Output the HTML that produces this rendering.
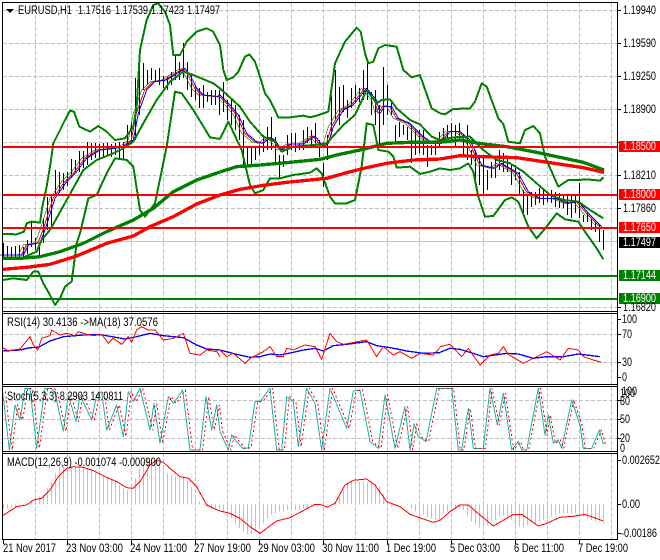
<!DOCTYPE html>
<html><head><meta charset="utf-8"><style>
html,body{margin:0;padding:0;background:#fff;width:660px;height:560px;overflow:hidden}
svg{position:absolute;left:0;top:0}
text{font-family:"Liberation Sans",sans-serif;font-size:11.5px;fill:#000}
.w{fill:#fff}
</style></head><body>
<svg width="660" height="560" viewBox="0 0 660 560" shape-rendering="crispEdges">
<rect width="660" height="560" fill="#fff"/>
<g stroke="#c0c0c0" stroke-width="1" stroke-dasharray="4 2" fill="none">
<path d="M35.5 3V539M67.5 3V539M99.5 3V539M131.5 3V539M163.5 3V539M195.5 3V539M227.5 3V539M259.5 3V539M291.5 3V539M323.5 3V539M355.5 3V539M387.5 3V539M419.5 3V539M451.5 3V539M483.5 3V539M515.5 3V539M547.5 3V539M579.5 3V539M611.5 3V539"/>
<path d="M3 10.5H617M3 43.5H617M3 76.5H617M3 109.5H617M3 142.5H617M3 175.5H617M3 208.5H617M3 275.5H617M3 307.5H617M3 334.5H617M3 362.5H617M3 400.5H617M3 419.5H617M3 438.5H617"/>
</g>
<path d="M3 241.5H617" stroke="#c0c0c0" fill="none"/>
<g transform="translate(0,305) scale(1,0.33333)">
<path stroke="#c0c0c0" stroke-width="1" fill="none" d="M3.5 598V610M7.5 598V610M11.5 598V608M15.5 598V607M19.5 598V605M23.5 598V603M27.5 598V600M31.5 598V590M35.5 598V580M39.5 598V575M43.5 598V570M47.5 598V550M51.5 598V530M55.5 598V505M59.5 598V485M63.5 598V480M67.5 598V480M71.5 598V484M75.5 598V485M79.5 598V485M83.5 598V488M87.5 598V490M91.5 598V492M95.5 598V495M99.5 598V505M103.5 598V510M107.5 598V515M111.5 598V520M115.5 598V530M119.5 598V540M123.5 598V550M127.5 598V555M131.5 598V550M135.5 598V520M139.5 598V490M143.5 598V470M147.5 598V462M151.5 598V460M155.5 598V465M159.5 598V475M163.5 598V490M167.5 598V505M171.5 598V510M175.5 598V515M179.5 598V517M183.5 598V515M187.5 598V525M191.5 598V545M195.5 598V575M199.5 598V590M203.5 598V600M207.5 598V605M211.5 598V610M215.5 598V612M219.5 598V612M223.5 598V620M227.5 598V630M231.5 598V640M235.5 598V655M239.5 598V670M243.5 598V680M247.5 598V688M251.5 598V688M255.5 598V680M259.5 598V670M263.5 598V655M267.5 598V640M271.5 598V630M275.5 598V625M279.5 598V620M283.5 598V620M287.5 598V615M291.5 598V617M295.5 598V615M299.5 598V615M303.5 598V612M307.5 598V610M311.5 598V605M315.5 598V600M319.5 598V595M323.5 598V590M327.5 598V600M331.5 598V600M335.5 598V590M339.5 598V575M343.5 598V555M347.5 598V535M351.5 598V530M355.5 598V530M359.5 598V530M363.5 598V530M367.5 598V532M371.5 598V533M375.5 598V537M379.5 598V545M383.5 598V565M387.5 598V590M391.5 598V605M395.5 598V600M399.5 598V598M403.5 598V598M407.5 598V600M411.5 598V610M415.5 598V620M419.5 598V625M423.5 598V630M427.5 598V635M431.5 598V640M435.5 598V645M439.5 598V645M443.5 598V625M447.5 598V620M451.5 598V605M455.5 598V610M459.5 598V610M463.5 598V615M467.5 598V635M471.5 598V650M475.5 598V660M479.5 598V668M483.5 598V665M487.5 598V660M491.5 598V650M495.5 598V645M499.5 598V635M503.5 598V630M507.5 598V640M511.5 598V645M515.5 598V660M519.5 598V665M523.5 598V668M527.5 598V660M531.5 598V655M535.5 598V655M539.5 598V650M543.5 598V645M547.5 598V640M551.5 598V635M555.5 598V630M559.5 598V625M563.5 598V625M567.5 598V625M571.5 598V625M575.5 598V625M579.5 598V630M583.5 598V635M587.5 598V640M591.5 598V645M595.5 598V650M599.5 598V650M603.5 598V655"/>
</g>
<path stroke="#000" stroke-width="1" fill="none" d="M3.5 243V258M7.5 246V258M11.5 247V257M15.5 246V258M19.5 245V257M23.5 247V258M27.5 240V254M31.5 222V247M35.5 238V250M39.5 243V257M43.5 218V243M47.5 197V230M51.5 195V225M55.5 170V195M59.5 172V193M63.5 173V190M67.5 172V186M71.5 159V178M75.5 160V172M79.5 151V172M83.5 151V168M87.5 142V165M91.5 143V160M95.5 143V158M99.5 144V158M103.5 143V157M107.5 143V155M111.5 144V157M115.5 143V155M119.5 142V158M123.5 142V160M127.5 125V147M131.5 122V142M135.5 78V140M139.5 58V115M143.5 63V90M147.5 70V85M151.5 68V80M155.5 70V82M159.5 68V85M163.5 76V88M167.5 77V90M171.5 72V85M175.5 55V80M179.5 62V80M183.5 43V78M187.5 62V90M191.5 75V97M195.5 85V100M199.5 88V108M203.5 85V108M207.5 92V102M211.5 90V105M215.5 90V105M219.5 90V115M223.5 82V112M227.5 100V120M231.5 100V125M235.5 105V130M239.5 115V140M243.5 120V165M247.5 148V165M251.5 148V165M255.5 147V160M259.5 145V155M263.5 135V152M267.5 127V150M271.5 117V150M275.5 137V165M279.5 155V178M283.5 155V167M287.5 135V155M291.5 133V150M295.5 133V152M299.5 143V150M303.5 130V150M307.5 127V143M311.5 130V145M315.5 123V147M319.5 140V157M323.5 163V187M327.5 135V160M331.5 95V135M335.5 70V120M339.5 87V125M343.5 85V112M347.5 100V118M351.5 88V108M355.5 85V102M359.5 88V102M363.5 70V100M367.5 62V100M371.5 92V115M375.5 90V125M379.5 105V147M383.5 67V125M387.5 85V115M391.5 100V115M395.5 125V142M399.5 122V137M403.5 125V135M407.5 127V140M411.5 125V163M415.5 130V155M419.5 130V153M423.5 130V155M427.5 145V167M431.5 145V155M435.5 140V155M439.5 132V148M443.5 128V140M447.5 125V138M451.5 123V140M455.5 125V147M459.5 123V140M463.5 135V155M467.5 125V160M471.5 150V165M475.5 150V183M479.5 155V185M483.5 155V195M487.5 170V190M491.5 162V178M495.5 160V178M499.5 150V170M503.5 153V172M507.5 157V172M511.5 165V185M515.5 165V180M519.5 172V195M523.5 190V215M527.5 195V215M531.5 192V207M535.5 192V205M539.5 188V203M543.5 190V205M547.5 193V202M551.5 190V203M555.5 192V207M559.5 193V208M563.5 195V208M567.5 195V215M571.5 195V218M575.5 195V213M579.5 183V218M583.5 215V222M587.5 213V222M591.5 218V230M595.5 222V232M599.5 225V242M603.5 230V250"/>
</svg>

<svg width="660" height="560" viewBox="0 0 1980 1680" shape-rendering="crispEdges" fill="none" stroke-linejoin="round">
<defs>
<polyline id="b1" points="8,765 70,765 85,735 120,728 135,690 165,595 200,545 230,515 260,475 300,450 370,442 400,420 415,340 440,270 465,245 500,240 540,215 555,205 570,225 590,265 610,285 660,290"/>
<polyline id="b2" points="0,285 30,315 55,345 80,400 110,425 130,430 150,412 165,420 185,450 215,432 250,432 285,408 310,440 325,430 340,380 370,330 400,315 440,265 470,300 480,340 495,318 515,320 535,355 570,370 610,410 640,430 660,430"/>
<polyline id="b3" points="0,430 30,395 60,395 90,420 125,495 165,505 185,490 235,520 265,575 300,595 350,595 385,610 415,605 450,645 485,680"/>
<polyline id="s1" points="8,260 28,435 45,300 60,345 75,250 90,250 110,430 125,320 135,250 155,250 165,265 190,378 205,270 228,350 240,270 275,345 290,270 305,260 320,375 350,300 370,395 385,260 400,290 420,250 450,375 462,295 480,415 505,275 520,295 548,255 570,435 600,435 618,275 635,375 650,300 660,380"/>
<polyline id="s2" points="0,380 25,435 35,390 50,410 70,432 85,428 105,290 120,290 150,250 170,435 185,435 200,275 220,290 235,425 260,250 285,295 305,435 330,250 380,370 400,258 420,255 450,410 475,430 495,270 525,430 555,305 570,435 582,357 595,395 618,410 650,250 660,250"/>
<polyline id="s3" points="0,250 35,250 55,435 65,435 85,310 100,430 130,430 150,250 172,360 190,265 215,435 235,410 245,435 260,435 295,250 315,390 325,330 340,415 355,405 365,430 395,285 420,360 430,430 455,430 478,375 490,418"/>
</defs>

<g>
<use href="#b1" stroke="#008000" stroke-width="2" transform="translate(-15,0)"/>
<use href="#b1" stroke="#f00" stroke-width="3" transform="translate(-6,0)"/>
<use href="#b1" stroke="#00f" stroke-width="3"/>
<g stroke="#008000" stroke-width="6">
<polyline points="8,702 50,703 72,695 80,670 95,665 120,668 127,620 140,560 150,500 160,430 175,400 195,360 210,332 222,335 238,380 270,395 295,378 320,395 345,420 375,415 400,380 410,320 420,150 440,60 460,15 475,10 495,35 510,75 520,165 540,165 560,125 590,95 620,85 640,95 660,135"/>
<polyline points="8,840 40,835 80,840 100,815 115,815 130,850 150,885 165,915 180,895 195,860 215,845 230,730 240,700 265,595 290,585 320,520 345,475 380,480 400,500 420,630 435,650 465,610 500,440 525,275 545,280 580,330 630,412 660,417"/>
<polyline points="8,775 70,772 110,755 125,720 150,690 200,600 250,510 290,480 340,460 370,445 400,425 430,370 470,300 510,245 550,215 580,225 640,250 660,265"/>
</g>
<polyline stroke="#008000" stroke-width="10" points="8,775 60,775 120,770 180,755 250,730 320,695 400,660 460,625 520,575 590,540 660,516"/>
<polyline stroke="#f00" stroke-width="10" points="8,808 80,802 150,793 230,768 320,730 400,708 450,680 520,650 590,612 660,585"/>
</g>
<g transform="translate(660,0)">
<use href="#b2" stroke="#008000" stroke-width="2" transform="translate(-15,0)"/>
<use href="#b2" stroke="#f00" stroke-width="3" transform="translate(-6,0)"/>
<use href="#b2" stroke="#00f" stroke-width="3"/>
<g stroke="#008000" stroke-width="6">
<polyline points="0,135 10,210 20,240 40,232 55,215 75,170 88,163 105,185 120,230 135,280 150,300 175,352 210,352 250,347 270,352 290,347 325,335 345,190 375,125 410,83 422,95 435,160 445,190 460,185 475,145 495,135 530,140 550,210 575,232 600,225 635,325 660,340"/>
<polyline points="0,417 25,365 65,450 90,555 105,580 130,570 150,535 180,535 220,525 270,518 290,505 305,520 330,590 345,610 380,610 405,600 425,500 440,370 460,375 475,450 505,455 520,470 530,503 570,500 600,522 630,515 660,505"/>
<polyline points="0,265 60,320 90,365 130,410 165,425 185,455 220,440 280,435 320,430 370,375 405,345 440,270 470,310 485,300 510,298 530,325 570,360 600,373 635,410 660,420"/>
</g>
<polyline stroke="#008000" stroke-width="10" points="0,516 50,500 120,495 200,488 300,478 350,465 420,450 500,430 570,427 660,427"/>
<polyline stroke="#f00" stroke-width="10" points="0,585 60,568 130,556 200,547 320,535 380,518 440,503 500,490 580,480 660,477"/>
</g>
<g transform="translate(1320,0)">
<use href="#b3" stroke="#008000" stroke-width="2" transform="translate(-15,0)"/>
<use href="#b3" stroke="#f00" stroke-width="3" transform="translate(-6,0)"/>
<use href="#b3" stroke="#00f" stroke-width="3"/>
<g stroke="#008000" stroke-width="6">
<polyline points="0,340 15,343 40,327 90,325 105,305 125,250 140,260 175,355 190,372 205,425 240,430 255,390 280,378 300,400 315,470 355,560 385,540 415,540 440,538 480,542 490,532"/>
<polyline points="0,505 30,510 60,505 85,490 100,515 115,590 135,650 160,648 195,600 215,592 235,605 265,680 290,715 320,680 350,640 375,658 415,665 435,695 470,745 490,778"/>
<polyline points="0,420 40,412 90,410 130,450 170,480 210,490 250,515 290,550 330,585 370,600 415,605 450,630 490,655"/>
</g>
<polyline stroke="#008000" stroke-width="10" points="0,427 60,420 130,432 200,440 280,455 360,472 430,487 492,510"/>
<polyline stroke="#f00" stroke-width="10" points="0,477 60,467 130,470 230,473 330,488 430,503 492,517"/>
</g>

<g transform="translate(0,915)">
<g stroke-width="3">
<polyline stroke="#00f" stroke-width="4" points="8,138 60,135 90,128 115,127 150,108 190,95 250,90 300,89 330,94 375,102 410,95 450,85 490,92 550,98 590,120 620,132 660,135"/>
<polyline stroke="#f00" points="8,128 25,137 60,132 90,95 100,120 113,135 125,100 150,92 155,75 180,90 200,85 225,92 235,80 260,88 280,92 305,88 325,115 340,100 365,118 385,95 395,112 410,75 425,65 445,75 465,75 490,105 520,100 550,85 570,145 600,150 620,135 650,140 660,155"/>
<use href="#s1" stroke="#20b2aa" stroke-width="3"/>
<use href="#s1" stroke="#f00" stroke-width="3" stroke-dasharray="6 8" transform="translate(8,0)"/>
<polyline stroke="#f00" points="8,632 30,618 50,605 80,600 100,585 125,580 150,555 175,515 200,490 220,485 250,487 280,497 320,517 350,530 380,548 400,550 420,530 450,480 470,465 490,472 510,490 540,515 565,520 590,545 620,600 640,610 660,618"/>
</g>
<g stroke-width="3" transform="translate(660,0)">
<polyline stroke="#00f" stroke-width="4" points="0,135 50,148 90,157 120,155 150,147 180,150 220,142 250,135 285,130 310,138 340,122 380,118 440,110 470,122 510,128 560,138 610,145 660,143"/>
<polyline stroke="#f00" points="0,135 20,155 40,145 75,175 90,160 130,140 150,125 170,155 190,155 200,130 220,135 255,120 285,125 305,163 330,85 350,110 370,118 440,105 470,155 490,125 520,150 540,140 575,160 600,145 640,150 660,128"/>
<use href="#s2" stroke="#20b2aa" stroke-width="3"/>
<use href="#s2" stroke="#f00" stroke-width="3" stroke-dasharray="6 8" transform="translate(8,0)"/>
<polyline stroke="#f00" points="0,618 30,625 60,640 90,665 120,685 140,670 170,648 210,638 250,617 285,598 300,598 322,606 345,595 375,540 400,526 440,522 465,540 500,590 540,605 570,628 610,642 640,652 660,646"/>
</g>
<g stroke-width="3" transform="translate(1320,0)">
<polyline stroke="#00f" stroke-width="4" points="0,142 30,130 60,133 100,145 130,155 200,145 235,147 280,160 320,155 370,155 415,147 480,155"/>
<polyline stroke="#f00" points="0,125 30,118 65,155 85,130 120,180 150,150 175,145 190,125 205,148 250,175 290,155 320,140 360,165 385,130 415,135 430,155 460,165 485,172"/>
<use href="#s3" stroke="#20b2aa" stroke-width="3"/>
<use href="#s3" stroke="#f00" stroke-width="3" stroke-dasharray="6 8" transform="translate(6,0)"/>
<polyline stroke="#f00" points="0,646 30,620 60,600 85,600 120,630 160,663 200,640 220,628 245,628 295,663 320,655 360,637 400,634 435,628 490,648"/>
</g>
</g>
</svg>

<svg width="660" height="560" viewBox="0 0 660 560">
<g shape-rendering="crispEdges" fill="none">
<path stroke="#f00" stroke-width="2" d="M3 147H617M3 195H617M3 228H617"/>
<path stroke="#008000" stroke-width="2" d="M3 276H617M3 299H617"/>
<path stroke="#000" stroke-width="1" d="M2.5 2.5H617.5V539.5H2.5ZM2.5 311.5H617.5M2.5 313.5H617.5M2.5 384.5H617.5M2.5 386.5H617.5M2.5 451.5H617.5M2.5 453.5H617.5"/>
<path stroke="#000" stroke-width="1" d="M618 10.5H621M618 43.5H621M618 76.5H621M618 109.5H621M618 142.5H621M618 175.5H621M618 208.5H621M618 307.5H621M618 319.5H621M618 334.5H621M618 362.5H621M618 377.5H621M618 400.5H621M618 419.5H621M618 438.5H621M618 460.5H621M618 504.5H621M618 533.5H621M3.5 540V544M67.5 540V544M131.5 540V544M195.5 540V544M259.5 540V544M323.5 540V544M387.5 540V544M451.5 540V544M515.5 540V544M579.5 540V544"/>
<rect x="619" y="141" width="41" height="11" fill="#f00"/>
<rect x="619" y="189" width="41" height="11" fill="#f00"/>
<rect x="619" y="222" width="41" height="11" fill="#f00"/>
<rect x="619" y="237" width="41" height="11" fill="#000"/>
<rect x="619" y="270" width="41" height="11" fill="#008000"/>
<rect x="619" y="293" width="41" height="11" fill="#008000"/>
</g>
<path d="M6 9H14L10 13Z" fill="#000"/>
<g lengthAdjust="spacingAndGlyphs">
<text lengthAdjust="spacingAndGlyphs" x="18" y="14" textLength="54">EURUSD,H1</text>
<text lengthAdjust="spacingAndGlyphs" x="78" y="14" textLength="33">1.17516</text>
<text lengthAdjust="spacingAndGlyphs" x="115" y="14" textLength="33">1.17539</text>
<text lengthAdjust="spacingAndGlyphs" x="151" y="14" textLength="33">1.17423</text>
<text lengthAdjust="spacingAndGlyphs" x="187" y="14" textLength="33">1.17497</text>
<text lengthAdjust="spacingAndGlyphs" x="7" y="326" textLength="151">RSI(14) 30.4136  -&gt;MA(18) 37.0576</text>
<text lengthAdjust="spacingAndGlyphs" x="7" y="400" textLength="116">Stoch(5,3,3) 8.2903 14.0811</text>
<text lengthAdjust="spacingAndGlyphs" x="7" y="466" textLength="154">MACD(12,26,9) -0.001074 -0.000900</text>
<text lengthAdjust="spacingAndGlyphs" x="623" y="14" textLength="33">1.19940</text>
<text lengthAdjust="spacingAndGlyphs" x="623" y="47" textLength="33">1.19590</text>
<text lengthAdjust="spacingAndGlyphs" x="623" y="80" textLength="33">1.19250</text>
<text lengthAdjust="spacingAndGlyphs" x="623" y="113" textLength="33">1.18900</text>
<text lengthAdjust="spacingAndGlyphs" x="623" y="179" textLength="33">1.18210</text>
<text lengthAdjust="spacingAndGlyphs" x="623" y="212" textLength="33">1.17860</text>
<text lengthAdjust="spacingAndGlyphs" x="623" y="311" textLength="33">1.16820</text>
<text lengthAdjust="spacingAndGlyphs" class="w" x="623" y="150" textLength="33">1.18500</text>
<text lengthAdjust="spacingAndGlyphs" class="w" x="623" y="198" textLength="33">1.18000</text>
<text lengthAdjust="spacingAndGlyphs" class="w" x="623" y="231" textLength="33">1.17650</text>
<text lengthAdjust="spacingAndGlyphs" class="w" x="623" y="246" textLength="33">1.17497</text>
<text lengthAdjust="spacingAndGlyphs" class="w" x="623" y="279" textLength="33">1.17144</text>
<text lengthAdjust="spacingAndGlyphs" class="w" x="623" y="302" textLength="33">1.16900</text>
<text lengthAdjust="spacingAndGlyphs" x="622" y="323" textLength="15">100</text>
<text lengthAdjust="spacingAndGlyphs" x="622" y="338" textLength="10">70</text>
<text lengthAdjust="spacingAndGlyphs" x="622" y="366" textLength="10">30</text>
<text lengthAdjust="spacingAndGlyphs" x="622" y="381" textLength="5">0</text>
<text lengthAdjust="spacingAndGlyphs" x="622" y="395" textLength="15">100</text>
<text lengthAdjust="spacingAndGlyphs" x="620" y="397" textLength="15">100</text>
<text lengthAdjust="spacingAndGlyphs" x="620" y="405" textLength="10">80</text>
<text lengthAdjust="spacingAndGlyphs" x="620" y="423" textLength="10">50</text>
<text lengthAdjust="spacingAndGlyphs" x="620" y="442" textLength="10">20</text>
<text lengthAdjust="spacingAndGlyphs" x="620" y="452" textLength="5">0</text>
<text lengthAdjust="spacingAndGlyphs" x="622" y="464" textLength="38">0.002652</text>
<text lengthAdjust="spacingAndGlyphs" x="622" y="508" textLength="18">0.00</text>
<text lengthAdjust="spacingAndGlyphs" x="621" y="537" textLength="36">-0.00186</text>
<text lengthAdjust="spacingAndGlyphs" x="3" y="552" textLength="53">21 Nov 2017</text>
<text lengthAdjust="spacingAndGlyphs" x="66" y="552" textLength="57">23 Nov 03:00</text>
<text lengthAdjust="spacingAndGlyphs" x="130" y="552" textLength="57">24 Nov 11:00</text>
<text lengthAdjust="spacingAndGlyphs" x="194" y="552" textLength="57">27 Nov 19:00</text>
<text lengthAdjust="spacingAndGlyphs" x="258" y="552" textLength="57">29 Nov 03:00</text>
<text lengthAdjust="spacingAndGlyphs" x="322" y="552" textLength="57">30 Nov 11:00</text>
<text lengthAdjust="spacingAndGlyphs" x="386" y="552" textLength="50">1 Dec 19:00</text>
<text lengthAdjust="spacingAndGlyphs" x="450" y="552" textLength="50">5 Dec 03:00</text>
<text lengthAdjust="spacingAndGlyphs" x="514" y="552" textLength="50">6 Dec 11:00</text>
<text lengthAdjust="spacingAndGlyphs" x="578" y="552" textLength="50">7 Dec 19:00</text>
</g>
</svg>
</body></html>
